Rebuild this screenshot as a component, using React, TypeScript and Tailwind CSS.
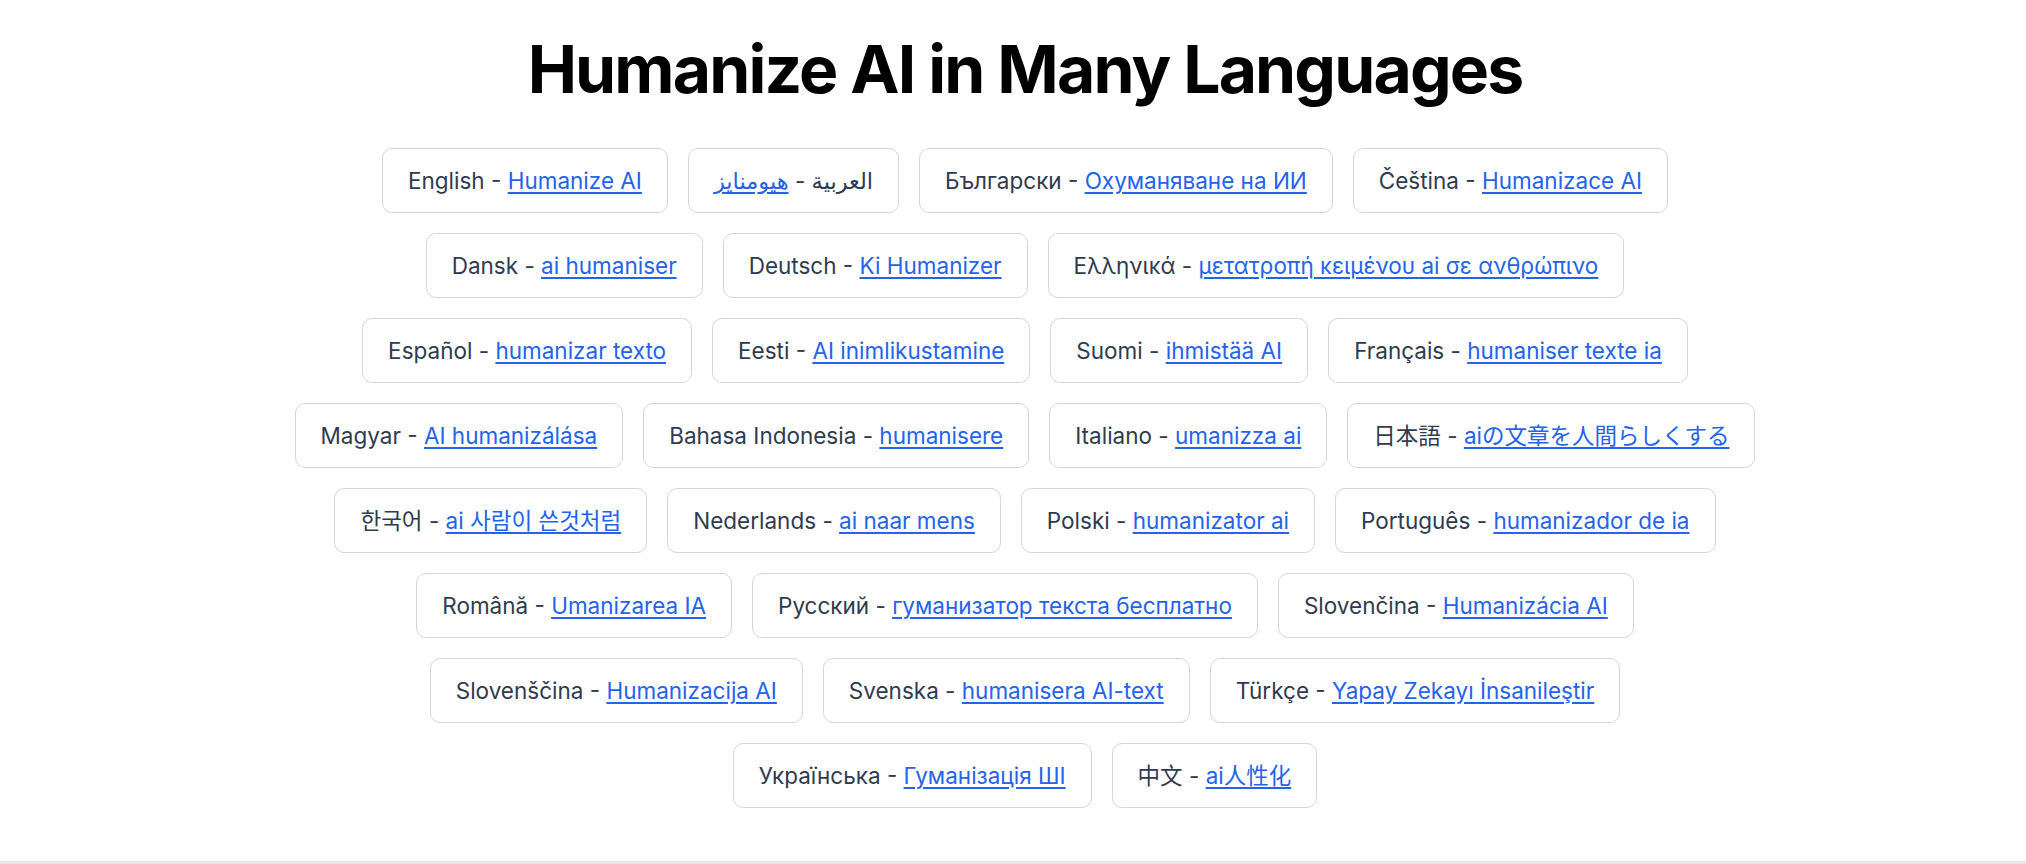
import React from "react";

type Item = { lang: string; text: string; font?: string };

const items: Item[] = [
  { lang: "English", text: "Humanize AI" },
  { lang: "العربية", text: "هيومنايز" },
  { lang: "Български", text: "Охуманяване на ИИ" },
  { lang: "Čeština", text: "Humanizace AI" },
  { lang: "Dansk", text: "ai humaniser" },
  { lang: "Deutsch", text: "Ki Humanizer" },
  { lang: "Ελληνικά", text: "μετατροπή κειμένου ai σε ανθρώπινο" },
  { lang: "Español", text: "humanizar texto" },
  { lang: "Eesti", text: "AI inimlikustamine" },
  { lang: "Suomi", text: "ihmistää AI" },
  { lang: "Français", text: "humaniser texte ia" },
  { lang: "Magyar", text: "AI humanizálása" },
  { lang: "Bahasa Indonesia", text: "humanisere" },
  { lang: "Italiano", text: "umanizza ai" },
  { lang: "日本語", text: "aiの文章を人間らしくする", font: "jp" },
  { lang: "한국어", text: "ai 사람이 쓴것처럼", font: "kr" },
  { lang: "Nederlands", text: "ai naar mens" },
  { lang: "Polski", text: "humanizator ai" },
  { lang: "Português", text: "humanizador de ia" },
  { lang: "Română", text: "Umanizarea IA" },
  { lang: "Русский", text: "гуманизатор текста бесплатно" },
  { lang: "Slovenčina", text: "Humanizácia AI" },
  { lang: "Slovenščina", text: "Humanizacija AI" },
  { lang: "Svenska", text: "humanisera AI-text" },
  { lang: "Türkçe", text: "Yapay Zekayı İnsanileştir" },
  { lang: "Українська", text: "Гуманізація ШІ" },
  { lang: "中文", text: "ai人性化", font: "sc" },
];

function fontClass(f?: string) {
  if (f === "jp") return "font-['Inter','Noto_Sans_CJK_JP',sans-serif]";
  if (f === "kr") return "font-['Inter','Noto_Sans_CJK_KR',sans-serif]";
  if (f === "sc") return "font-['Inter','Noto_Sans_CJK_SC',sans-serif]";
  return "font-['Inter','Noto_Sans','DejaVu_Sans',sans-serif]";
}

function Card({ item }: { item: Item }) {
  return (
    <div
      className={`rounded-[10px] border border-[#cfd8e3] bg-white px-[25px] py-[14px] text-[22.5px] leading-[35px] text-[#2f3b4e] ${fontClass(
        item.font
      )}`}
    >
      {item.lang} -{" "}
      <a href="#" className="text-[#2563eb] underline underline-offset-[3px]">
        {item.text}
      </a>
    </div>
  );
}

export default function App() {
  return (
    <div className="min-h-screen bg-white font-['Inter',sans-serif]">
      <section className="box-border h-[861px] pl-[24px] pt-[36px]">
        <div className="mx-auto w-[1520px]">
          <h1 className="text-center text-[66px] font-bold leading-none tracking-[-0.028em] text-black">
            Humanize AI in Many Languages
          </h1>
          <div className="mt-[46px] flex flex-wrap justify-center gap-x-5 gap-y-5">
            {items.map((it) => (
              <Card key={it.lang} item={it} />
            ))}
          </div>
        </div>
      </section>
      <footer className="h-[3px] bg-[#e6e7e9]" />
    </div>
  );
}
